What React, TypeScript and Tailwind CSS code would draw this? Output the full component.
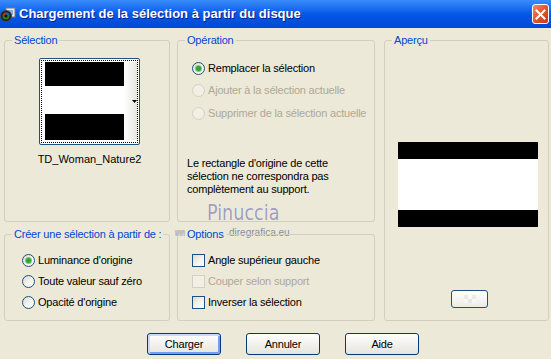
import React from "react";

const Radio = ({ checked = false, disabled = false }: { checked?: boolean; disabled?: boolean }) =>
  disabled ? (
    <span className="w-[13px] h-[13px] rounded-full border border-[#D2D0C3] bg-[#F1EFE6] shrink-0" />
  ) : (
    <span className="w-[13px] h-[13px] rounded-full border border-[#1C5180] bg-gradient-to-br from-[#DCDCD4] via-[#F1F1ED] to-white flex items-center justify-center shrink-0">
      {checked && <span className="w-[5px] h-[5px] rounded-full bg-[#2FA62F] shadow-[0_0_0_1px_#7CCB7C]" />}
    </span>
  );

const Check = ({ disabled = false }: { disabled?: boolean }) =>
  disabled ? (
    <span className="w-[13px] h-[13px] border border-[#D2D0C3] bg-[#F1EFE6] shrink-0" />
  ) : (
    <span className="w-[13px] h-[13px] border border-[#1C5180] bg-gradient-to-br from-[#DCDCD4] via-[#F1F1ED] to-white shrink-0" />
  );

const Legend = ({ children }: { children: React.ReactNode }) => (
  <legend className="ml-[7px] px-[2px] text-[#0046D5] leading-[13px] whitespace-nowrap bg-[#ECE9D8]">{children}</legend>
);

export default function App() {
  return (
    <div className="relative isolate w-[551px] h-[359px] overflow-hidden bg-[#ECE9D8] text-[11px] tracking-[-0.2px] text-black font-['Liberation_Sans',Arial,sans-serif]">
      {/* Title bar */}
      <div className="h-[28px] flex items-center bg-gradient-to-b from-[#3A8CFC] via-[#0558E8] to-[#0147D6] tracking-normal">
        <svg width="16" height="16" viewBox="0 0 16 16" className="mt-[1px] shrink-0">
          <rect x="6" y="1" width="9" height="9" fill="#E8E8E8" stroke="#6B7A8C" />
          <rect x="8" y="3" width="5" height="5" fill="#7FB0E0" />
          <circle cx="6" cy="9" r="5.5" fill="#1A1A1A" stroke="#4C4C4C" />
          <circle cx="6" cy="9" r="3.5" fill="#2E7D32" />
          <path d="M6 5.5 A3.5 3.5 0 0 1 9.5 9 L6 9 Z" fill="#1E63C8" />
          <path d="M2.5 9 A3.5 3.5 0 0 1 6 5.5 L6 9 Z" fill="#C62828" />
          <circle cx="6" cy="9" r="1.5" fill="#111" />
        </svg>
        <span className="ml-[3px] text-white font-bold text-[13px] leading-[16px] [text-shadow:1px_1px_0_#0A1E8A]">
          Chargement de la sélection à partir du disque
        </span>
        <div className="ml-auto mr-[2px] w-[17px] h-[20px] rounded-[3px] border border-white bg-gradient-to-br from-[#EB8A68] via-[#E2542A] to-[#C53A14] flex items-center justify-center">
          <svg width="11" height="11" viewBox="0 0 11 11">
            <path d="M1.5 1.5 L9.5 9.5 M9.5 1.5 L1.5 9.5" stroke="white" strokeWidth="2" strokeLinecap="square" />
          </svg>
        </div>
      </div>

      {/* Body */}
      <div className="pt-[6px] pl-[4px]">
        <div className="grid grid-cols-[166px_198px_167px] grid-rows-[188px_93px] gap-x-[7px] gap-y-[6px]">
          {/* Sélection */}
          <fieldset className="h-full min-w-0 border border-[#D0D0BF] rounded-[3px]">
            <Legend>Sélection</Legend>
            <div className="ml-[34px] mt-[11px] w-[101px] h-[87px] border border-[#1C5180] rounded-[2px] p-[1px] bg-white">
              <div className="w-full h-full border border-dotted border-black flex pl-[3px] pt-[1px]">
                <div className="w-[79px] h-[78px] flex flex-col">
                  <div className="h-[24px] bg-black" />
                  <div className="h-[28px] bg-white" />
                  <div className="h-[26px] bg-black" />
                </div>
                <div className="flex-1 h-[78px] bg-gradient-to-r from-white to-[#E6E6E0] flex items-center justify-end">
                  <svg width="5" height="3" viewBox="0 0 5 3">
                    <path d="M0 0 L5 0 L2.5 3 Z" fill="black" />
                  </svg>
                </div>
              </div>
            </div>
            <div className="ml-[34px] mt-[8px] w-[101px] flex justify-center whitespace-nowrap leading-[13px] tracking-normal">
              TD_Woman_Nature2
            </div>
          </fieldset>

          {/* Opération */}
          <fieldset className="h-full min-w-0 border border-[#D0D0BF] rounded-[3px]">
            <Legend>Opération</Legend>
            <div className="mt-[10px] pl-[14px] flex flex-col">
              <div className="h-[22px] flex items-center gap-[3px]">
                <Radio checked />
                <span>Remplacer la sélection</span>
              </div>
              <div className="h-[23px] flex items-center gap-[3px] text-[#ACA899]">
                <Radio disabled />
                <span>Ajouter à la sélection actuelle</span>
              </div>
              <div className="h-[22px] flex items-center gap-[3px] text-[#ACA899]">
                <Radio disabled />
                <span className="whitespace-nowrap">Supprimer de la sélection actuelle</span>
              </div>
            </div>
            <p className="mt-[33px] pl-[9px] leading-[13px]">
              Le rectangle d'origine de cette
              <br />
              sélection ne correspondra pas
              <br />
              complètement au support.
            </p>
          </fieldset>

          {/* Aperçu */}
          <fieldset className="row-span-2 ml-[2px] h-full min-w-0 border border-[#D0D0BF] rounded-[3px]">
            <Legend>Aperçu</Legend>
            <div className="ml-[13px] mt-[95px] w-[140px] h-[85px] flex flex-col">
              <div className="h-[17px] bg-black" />
              <div className="h-[51px] bg-white" />
              <div className="h-[17px] bg-black" />
            </div>
            <div className="ml-[66px] mt-[63px] w-[37px] h-[18px] rounded-[3px] border border-[#1C5180] bg-gradient-to-b from-white to-[#ECEBE6] flex items-center justify-center">
              <div className="grid grid-cols-3 w-[12px] h-[8px] opacity-40">
                <span className="bg-[#D8D8D8]" />
                <span className="bg-white" />
                <span className="bg-[#D8D8D8]" />
                <span className="bg-white" />
                <span className="bg-[#D8D8D8]" />
                <span className="bg-white" />
              </div>
            </div>
          </fieldset>

          {/* Créer */}
          <fieldset className="h-full min-w-0 border border-[#D0D0BF] rounded-[3px]">
            <Legend>Créer une sélection à partir de :</Legend>
            <div className="mt-[9px] pl-[17px] flex flex-col">
              <div className="h-[21px] flex items-center gap-[3px]">
                <Radio checked />
                <span>Luminance d'origine</span>
              </div>
              <div className="h-[21px] flex items-center gap-[3px]">
                <Radio />
                <span>Toute valeur sauf zéro</span>
              </div>
              <div className="h-[21px] flex items-center gap-[3px]">
                <Radio />
                <span>Opacité d'origine</span>
              </div>
            </div>
          </fieldset>

          {/* Options */}
          <fieldset className="h-full min-w-0 border border-[#D0D0BF] rounded-[3px]">
            <Legend>Options</Legend>
            <div className="mt-[9px] pl-[14px] flex flex-col">
              <div className="h-[21px] flex items-center gap-[3px]">
                <Check />
                <span>Angle supérieur gauche</span>
              </div>
              <div className="h-[21px] flex items-center gap-[3px] text-[#ACA899]">
                <Check disabled />
                <span>Couper selon support</span>
              </div>
              <div className="h-[21px] flex items-center gap-[3px]">
                <Check />
                <span>Inverser la sélection</span>
              </div>
            </div>
          </fieldset>
        </div>

        {/* Buttons */}
        <div className="mt-[12px] ml-[143px] flex gap-[25px]">
          <button className="w-[74px] h-[22px] rounded-[3px] border border-[#003C74] bg-gradient-to-b from-white to-[#E6E4DC] shadow-[inset_1px_1px_0_1px_#C8DAFB,inset_-1px_-1px_0_1px_#7A9CF0] leading-none">
            Charger
          </button>
          <button className="w-[74px] h-[22px] rounded-[3px] border border-[#003C74] bg-gradient-to-b from-white to-[#E6E4DC] leading-none">
            Annuler
          </button>
          <button className="w-[74px] h-[22px] rounded-[3px] border border-[#003C74] bg-gradient-to-b from-white to-[#E6E4DC] leading-none">
            Aide
          </button>
        </div>
      </div>

      {/* Watermark */}
      <div className="absolute left-[207px] top-[201px] leading-[24px] text-[22px] tracking-normal text-[#8F8CB2]/85 font-['DejaVu_Sans',sans-serif] scale-x-[0.8] origin-left [text-shadow:0_0_1px_#ffffff]">
        Pinuccia
      </div>
      <div className="absolute -z-[1] left-[175px] top-[227px] leading-[12px] text-[10px] tracking-normal text-[#8C8AA6] scale-x-[0.55] origin-left">
        www
      </div>
      <div className="absolute -z-[1] left-[229px] top-[227px] leading-[12px] text-[10px] tracking-normal text-[#8C8AA6]">
        diregrafica.eu
      </div>
    </div>
  );
}
